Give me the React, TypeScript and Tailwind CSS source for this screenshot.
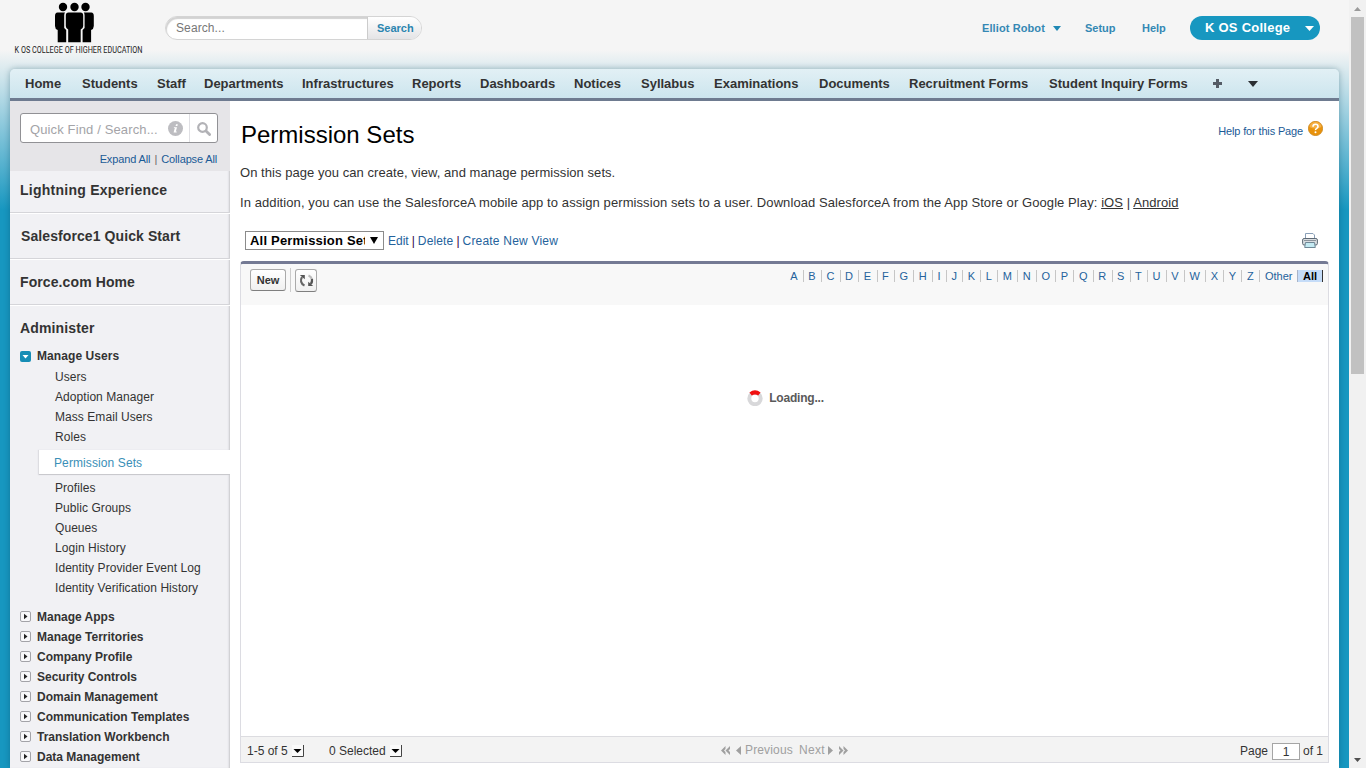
import React from "react";

const tabs: [string, string][] = [
  ["Home", "w-[57px]"],
  ["Students", "w-[75px]"],
  ["Staff", "w-[47px]"],
  ["Departments", "w-[98px]"],
  ["Infrastructures", "w-[110px]"],
  ["Reports", "w-[68px]"],
  ["Dashboards", "w-[94px]"],
  ["Notices", "w-[67px]"],
  ["Syllabus", "w-[73px]"],
  ["Examinations", "w-[105px]"],
  ["Documents", "w-[90px]"],
  ["Recruitment Forms", "w-[140px]"],
  ["Student Inquiry Forms", "w-[164px]"],
];

const usersBefore = ["Users", "Adoption Manager", "Mass Email Users", "Roles"];
const usersAfter = [
  "Profiles",
  "Public Groups",
  "Queues",
  "Login History",
  "Identity Provider Event Log",
  "Identity Verification History",
];
const sections = [
  "Manage Apps",
  "Manage Territories",
  "Company Profile",
  "Security Controls",
  "Domain Management",
  "Communication Templates",
  "Translation Workbench",
  "Data Management",
];

function Logo() {
  return (
    <svg className="ml-[10px] block h-[60px] w-[137px] shrink-0 overflow-visible" viewBox="-4 0 137 60">
      <g fill="#000">
        <circle cx="49" cy="7" r="4.2" />
        <circle cx="60.5" cy="7" r="4.2" />
        <circle cx="71.5" cy="7" r="4.2" />
        <path d="M43.500 12.500h7.500q-.8 1-.8 3v12.500l2 2v12.300h-8.500v-12.300q-2.700-1-2.700-4v-10q0-3.500 2.500-3.500z" />
        <path d="M77.300 12.500h-7.500q.8 1 .8 3v12.500l-2 2v12.300h8.500v-12.300q2.700-1 2.700-4v-10q0-3.500-2.500-3.500z" />
        <path
          d="M54.500 12.500h12q2.700 0 2.700 3v10.500q0 2.500-2.500 3.500v12.800h-12.500v-12.800q-2.400-1-2.400-3.500v-10.500q0-3 2.700-3z"
          stroke="#f5f5f5"
          strokeWidth="1.200"
          paintOrder="stroke"
        />
      </g>
      <text x="0.500" y="52.500" textLength="128" lengthAdjust="spacingAndGlyphs" fontSize="9.800" fontFamily="Roboto, 'Liberation Sans', sans-serif" fill="#222">
        K OS COLLEGE OF HIGHER EDUCATION
      </text>
    </svg>
  );
}

function Caret({ className }: { className: string }) {
  return (
    <svg className={className} viewBox="0 0 10 6" preserveAspectRatio="none">
      <path d="M0 0h10l-5 6z" fill="currentColor" />
    </svg>
  );
}

function Header() {
  return (
    <header className="flex h-[69px] items-start">
      <Logo />
      <div className="mt-4 ml-[18px] flex h-6 w-[257px] overflow-hidden rounded-full border border-[#d4d4d4] bg-white shadow-[inset_1px_2px_1px_#d2d2d2]">
        <div className="w-[201px] pl-[10px] text-[12px] leading-[22px] tracking-[0.1px] text-[#777]">Search...</div>
        <div className="flex-1 border-l border-[#ccc] bg-linear-to-b from-white to-[#e4e4e6] pl-[9px] text-[11px] leading-[22px] font-bold text-[#2a85b0]">
          Search
        </div>
      </div>
      <div className="mt-4 ml-auto flex h-6 items-center text-[11px] font-bold text-[#3488b4]">
        <span className="w-[71px] tracking-[0.1px]">Elliot Robot</span>
        <Caret className="h-[5px] w-[8px] text-[#1f88b4]" />
        <span className="ml-[24px] w-[57px]">Setup</span>
        <span className="w-[48px]">Help</span>
        <div className="mr-[29px] flex h-6 w-[130px] items-center rounded-full bg-[#1797c0] pl-[15px] text-[13px] text-white">
          <span className="w-[100px] tracking-[0.25px]">K OS College</span>
          <Caret className="mt-px h-[5px] w-[9px]" />
        </div>
      </div>
    </header>
  );
}

function NavBar() {
  return (
    <nav className="flex h-8 shrink-0 items-center rounded-t-[5px] border-b-3 border-[#6e7b90] bg-linear-to-b from-[#e2f0f5] to-[#cce5ee] pl-[15px] text-[13px] font-bold text-[#333]">
      {tabs.map(([label, width]) => (
        <span key={label} className={`${width} whitespace-nowrap`}>
          {label}
        </span>
      ))}
      <svg className="h-[9px] w-[9px]" viewBox="0 0 9 9">
        <path d="M3 0h3v3h3v3h-3v3h-3v-3h-3v-3h3z" fill="#555c66" />
      </svg>
      <Caret className="ml-[26px] h-[6px] w-[10px] text-[#2b2f33]" />
    </nav>
  );
}

function SideHeading({ children, className }: { children: string; className: string }) {
  return (
    <div className={`${className} border-b border-[#d5d5d9] pl-[10px] text-[14px] font-bold text-[#333]`}>
      {children}
    </div>
  );
}

function SideLink({ children }: { children: string }) {
  return <div className="h-5 pl-[45px] text-[12px] leading-5 tracking-[0.06px] whitespace-nowrap">{children}</div>;
}

function Sidebar() {
  return (
    <aside className="w-[220px] shrink-0 bg-[#f1f1f4] text-[#333] shadow-[inset_-2px_0_2px_-1px_#c6c6ca]">
      <div className="h-[70px] bg-[#e6e5e8] pt-3">
        <div className="ml-[10px] flex h-[30px] w-[198px] items-center rounded-[3px] border border-[#919195] bg-white">
          <span className="mt-[3px] w-[138px] pl-[9px] text-[13px] tracking-[0.13px] whitespace-nowrap text-[#a4a4a8]">
            Quick Find / Search...
          </span>
          <svg className="ml-[9px] h-[15px] w-[15px]" viewBox="0 0 15 15">
            <circle cx="7.500" cy="7.500" r="7.500" fill="#bdbdc1" />
            <path d="M8 3.300h1.800l-.4 1.600h-1.800zM6 6.200h3l-1.200 4.300h1l-.2.900h-3l1.200-4.300h-1z" fill="#fff" />
          </svg>
          <div className="ml-[6px] flex h-full flex-1 items-center border-l border-[#e0e0e4] pl-[7px]">
            <svg className="mt-[2px] h-[14px] w-[14px]" viewBox="0 0 14 14" fill="none" stroke="#b2b2b6">
              <circle cx="5.500" cy="5.500" r="4.300" strokeWidth="2.200" />
              <path d="M9 9l3.600 3.600" strokeWidth="2.800" strokeLinecap="round" />
            </svg>
          </div>
        </div>
        <div className="mt-[9px] mr-[13px] flex justify-end text-[11px] leading-[14px] text-[#1a5a96]">
          <span className="tracking-[-0.12px]">Expand All</span>
          <span className="mx-1 text-[#666]">|</span>
          <span className="tracking-[-0.15px]">Collapse All</span>
        </div>
      </div>
      <SideHeading className="h-[42px] leading-[38px] tracking-[0.25px]">Lightning Experience</SideHeading>
      <SideHeading className="h-[46px] border-t border-t-white pl-[11px] leading-[45px] tracking-[0.09px]">Salesforce1 Quick Start</SideHeading>
      <SideHeading className="h-[46px] border-t border-t-white leading-[45px] tracking-[0.1px]">Force.com Home</SideHeading>
      <div className="h-[41px] border-t border-white pl-[10px] text-[14px] leading-[45px] font-bold tracking-[0.15px]">Administer</div>
      <div className="flex h-[21px] items-center pb-px pl-[10px] text-[12px] leading-5 font-bold tracking-[0.08px]">
        <svg className="mr-[6px] h-[11px] w-[11px]" viewBox="0 0 11 11">
          <rect width="11" height="11" rx="2" fill="#168db5" />
          <path d="M2.500 4h6l-3 3.500z" fill="#fff" />
        </svg>
        Manage Users
      </div>
      {usersBefore.map((s) => (
        <SideLink key={s}>{s}</SideLink>
      ))}
      <div className="mt-[3px] mb-[3px] ml-[29px] h-[25px] border-b border-[#c9c9cd] bg-white pl-[15px] text-[12px] leading-[26px] tracking-[0.1px] text-[#3a8fb7] shadow-[-1px_0_1px_#dddde1]">
        Permission Sets
      </div>
      {usersAfter.map((s) => (
        <SideLink key={s}>{s}</SideLink>
      ))}
      <div className="mt-[9px]">
        {sections.map((s) => (
          <div key={s} className="flex h-5 items-center pl-[10px] text-[12px] leading-5 font-bold whitespace-nowrap">
            <svg className="mr-[6px] mb-px h-[11px] w-[11px]" viewBox="0 0 11 11">
              <rect x=".5" y=".5" width="10" height="10" rx="1.500" fill="#f8f8fa" stroke="#a3a3a8" />
              <path d="M4 2.800l3.500 2.700l-3.500 2.700z" fill="#222" />
            </svg>
            {s}
          </div>
        ))}
      </div>
    </aside>
  );
}

function AlphaFilter() {
  return (
    <div className="mt-[6px] ml-auto mr-[5px] flex h-3 text-[11px] leading-3 text-[#24629c]">
      {"ABCDEFGHIJKLMNOPQRSTUVWXYZ".split("").map((c) => (
        <span key={c} className="border-r border-[#c6c6c6] pr-[5.400px] pl-[4.400px]">
          {c}
        </span>
      ))}
      <span className="w-[37px] pl-[5px]">Other</span>
      <span className="w-[26px] border-r border-l border-r-[#333] border-l-[#a9b4c8] bg-[#c5dcf8] pl-[5px] font-bold text-black">All</span>
    </div>
  );
}

function MenuArrow() {
  return (
    <svg className="mx-[4px] mb-px h-[12px] w-[12px]" viewBox="0 0 12 12">
      <path d="M0 0h12v12h-12z" fill="#fafafa" />
      <path d="M11.500 0v11.500h-11.500" fill="none" stroke="#444" />
      <path d="M1.500 4h8l-4 4z" fill="#000" />
    </svg>
  );
}

function Pager() {
  return (
    <div className="flex w-[128px] items-center text-[12px] text-[#a0a0a0]">
      <svg className="mb-[2px] h-[9px] w-[9px]" viewBox="0 0 9 9" fill="#a0a0a0">
        <path d="M4.500 0v3l-1.500 1.500l1.500 1.500v3l-4.500-4.500zM9 0v3l-1.500 1.500l1.500 1.500v3l-4.500-4.500z" />
      </svg>
      <svg className="mb-[2px] ml-[6px] mr-[4px] h-[9px] w-[5px]" viewBox="0 0 5 9" fill="#a0a0a0">
        <path d="M5 0v9l-5-4.500z" />
      </svg>
      <span className="mb-[2px] w-[54px] tracking-[0.15px]">Previous</span>
      <span className="mb-[2px] w-[29px] tracking-[0.3px]">Next</span>
      <svg className="mb-[2px] h-[9px] w-[5px]" viewBox="0 0 5 9" fill="#a0a0a0">
        <path d="M0 0v9l5-4.500z" />
      </svg>
      <svg className="mb-[2px] ml-[6px] h-[9px] w-[9px]" viewBox="0 0 9 9" fill="#a0a0a0">
        <path d="M0 0v3l1.500 1.500l-1.500 1.500v3l4.500-4.500zM4.500 0v3l1.500 1.500l-1.500 1.500v3l4.500-4.500z" />
      </svg>
    </div>
  );
}

function ListPanel() {
  return (
    <section className="mt-[11px] flex h-[502px] flex-col overflow-hidden rounded-t-[4px] border border-t-3 border-[#dcdce2] border-t-[#747a94]">
      <div className="flex h-[41px] shrink-0 bg-[#f8f8f8]">
        <button className="mt-[5px] ml-[9px] h-[22px] w-9 rounded-[3px] border border-[#aaa] border-b-[#7f7f7f] bg-linear-to-b from-white to-[#f0f0f0] text-[11px] leading-[20px] font-bold text-[#333]">
          New
        </button>
        <div className="mt-1 ml-1 h-6 w-px bg-[#ccc]" />
        <button className="mt-[5px] ml-1 flex h-[23px] w-[22px] items-center justify-center rounded-[3px] border border-[#aaa] border-b-[#7f7f7f] bg-linear-to-b from-white to-[#f0f0f0]">
          <svg className="h-[13px] w-[15px]" viewBox="0 0 15 13" fill="none" strokeWidth="2.200">
            <path d="M5.500 11.500c-3.800-1.500-4.300-5.500-2.500-8.500" stroke="#666" />
            <path d="M.8 1h5v4.200z" fill="#555" />
            <path d="M9.500 1.500c3.800 1.500 4.300 5.500 2.500 8.500" stroke="#bbb" />
            <path d="M13 5c.4 2-.2 3.500-1.100 5" stroke="#555" />
            <path d="M14.200 12h-5v-4.200z" fill="#555" />
          </svg>
        </button>
        <AlphaFilter />
      </div>
      <div className="flex flex-1 items-start justify-center">
        <div className="mt-[84px] ml-[2px] flex items-center text-[12px] leading-[18px] font-bold tracking-[-0.2px] text-[#5a5a5a]">
          <svg className="mr-[6px] h-4 w-4" viewBox="0 0 16 16" fill="none">
            <circle cx="8" cy="8.500" r="5.700" stroke="#d8d8da" strokeWidth="4" />
            <path d="M3.600 4q4.400-3.200 8.800 0" stroke="#f01010" strokeWidth="4" />
          </svg>
          Loading...
        </div>
      </div>
      <footer className="flex h-[26px] shrink-0 items-center border-t border-[#dcdce0] bg-[#f3f3f3] pt-[3px] pl-[6px] text-[12px] leading-[18px] text-[#333]">
        <div className="flex w-[82px] items-center whitespace-nowrap">1-5 of 5<MenuArrow /></div>
        <div className="flex w-[392px] items-center whitespace-nowrap">0 Selected<MenuArrow /></div>
        <Pager />
        <div className="mr-[5px] ml-auto flex items-center">
          <span>Page</span>
          <span className="mr-[3px] ml-[4px] h-[17px] w-7 border border-[#a5a5a5] bg-white text-center leading-[16px]">1</span>
          <span>of 1</span>
        </div>
      </footer>
    </section>
  );
}

function Main() {
  return (
    <main className="flex flex-1 flex-col bg-white px-[10px] text-[13px] text-[#333]">
      <div className="flex h-[62px] items-start justify-between">
        <h1 className="mt-[19px] ml-px text-[24px] leading-[30px] text-black">Permission Sets</h1>
        <div className="mt-5 mr-[6px] flex items-start text-[11px] leading-4 text-[#1a5a96]">
          <span className="mt-[2px] tracking-[-0.15px]">Help for this Page</span>
          <svg className="ml-[5px] h-[15px] w-[15px]" viewBox="0 0 15 15">
            <circle cx="7.500" cy="7.500" r="7.200" fill="#e8920c" stroke="#bf790f" strokeWidth=".6" />
            <path d="M1.500 6a6 5 0 0 1 12 0q-6 3-12 0z" fill="#f5b044" />
            <path d="M5 5.700q0-2.400 2.500-2.400t2.500 2.200q0 1.100-1.300 1.900t-1.200 1.800" fill="none" stroke="#fff" strokeWidth="1.600" />
            <circle cx="7.500" cy="11.300" r="1" fill="#fff" />
          </svg>
        </div>
      </div>
      <p className="h-[30px] leading-5 tracking-[0.05px]">On this page you can create, view, and manage permission sets.</p>
      <p className="h-5 leading-5 tracking-[0.083px] whitespace-nowrap">
        In addition, you can use the SalesforceA mobile app to assign permission sets to a user. Download SalesforceA from the App Store or Google Play:{" "}
        <span className="underline">iOS</span> | <span className="underline">Android</span>
      </p>
      <div className="mt-[18px] flex h-[19px] items-center pl-[5px] text-[12px] leading-[18px] text-[#24629c]">
        <div className="flex h-[19px] w-[139px] items-center border border-[#8b8b8b] bg-white pl-[4px] text-[13px] font-bold text-black">
          <span className="w-[115px] overflow-hidden tracking-[0.2px] whitespace-nowrap">All Permission Sets</span>
          <Caret className="mb-px ml-[5px] h-[7px] w-[8px]" />
        </div>
        <span className="ml-1">Edit</span>
        <span className="mx-[3px] text-[#330044]">|</span>
        <span className="tracking-[0.15px]">Delete</span>
        <span className="mx-[3px] text-[#330044]">|</span>
        <span className="tracking-[0.2px]">Create New View</span>
        <svg className="mr-[11px] ml-auto h-[15px] w-4" viewBox="0 0 16 15">
          <path d="M3.500 6v-5.500h7.500l1.500 1.500v4" fill="#fff" stroke="#8aa0b8" />
          <rect x=".6" y="5.500" width="14.800" height="6.500" rx="1.500" fill="#d9dde0" stroke="#5c6874" />
          <path d="M2 7.500h12" stroke="#8b949c" />
          <path d="M3.500 9.500h9l.8 5h-10.600z" fill="#c4eaf2" stroke="#6f8796" />
        </svg>
      </div>
      <ListPanel />
    </main>
  );
}

function Scrollbar() {
  return (
    <div className="flex h-full w-[17px] shrink-0 flex-col items-center bg-[#f1f1f1]">
      <div className="flex h-[17px] items-center">
        <Caret className="h-[4px] w-[7px] rotate-180 text-[#9a9a9a]" />
      </div>
      <div className="h-[357px] w-[13px] bg-[#c1c1c1]" />
      <div className="mt-auto flex h-[17px] items-center">
        <Caret className="h-[4px] w-[7px] text-[#505050]" />
      </div>
    </div>
  );
}

export default function App() {
  return (
    <div className="flex h-[768px] w-[1366px] overflow-hidden bg-[#1797c0] font-['Liberation_Sans',Arial,sans-serif]">
      <div className="flex min-w-0 flex-1 flex-col bg-[linear-gradient(to_bottom,#f5f5f5_0,#f5f5f5_50px,#1797c0_210px)]">
        <Header />
        <div className="mx-[10px] flex min-h-0 flex-1 flex-col rounded-t-[5px] shadow-[0_0_6px_rgba(0,60,80,0.35)]">
          <NavBar />
          <div className="flex min-h-0 flex-1">
            <Sidebar />
            <Main />
          </div>
        </div>
      </div>
      <Scrollbar />
    </div>
  );
}
